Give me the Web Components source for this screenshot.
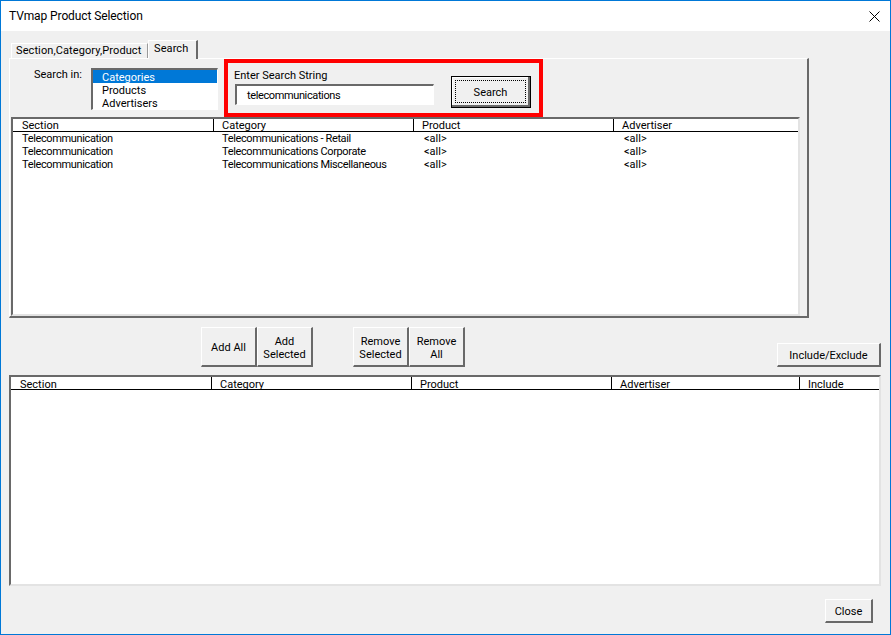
<!DOCTYPE html>
<html>
<head>
<meta charset="utf-8">
<title>TVmap Product Selection</title>
<style>
  html, body { margin: 0; padding: 0; background: #f0f0f0; }
  body { font: 11px/13px Roboto, "Liberation Sans", sans-serif; color: #000; }
</style>
</head>
<body>
<tv-dialog heading="TVmap Product Selection">
  <tv-tabs>
    <div class="top-row" style="display:flex;height:58px;">
      <div style="width:24px"></div>
      <div style="width:57px;padding-top:9px;">Search in:</div>
      <tv-listbox style="margin-top:9px"></tv-listbox>
      <tv-search style="margin-left:6px"></tv-search>
    </div>
    <tv-grid id="results" columns="200,200,200,185" style="width:789px;height:199px;margin-left:1px"></tv-grid>
  </tv-tabs>

  <div style="display:flex;align-items:flex-end;height:40px;margin:9px 0 8px 0;">
    <tv-button style="margin-left:192px;width:56px;height:40px">Add All</tv-button>
    <tv-button style="width:56px;height:40px">Add<br>Selected</tv-button>
    <tv-button style="margin-left:40px;width:56px;height:40px">Remove<br>Selected</tv-button>
    <tv-button style="width:56px;height:40px">Remove<br>All</tv-button>
    <tv-button style="margin-left:312px;width:104px;height:24px">Include/Exclude</tv-button>
  </div>

  <tv-grid id="chosen" columns="200,200,200,188,81" style="width:872px;height:211px"></tv-grid>

  <div style="display:flex;justify-content:flex-end;margin:13px 9px 0 0;">
    <tv-button style="width:48px;height:24px">Close</tv-button>
  </div>
</tv-dialog>

<script>
class TvDialog extends HTMLElement {
  constructor() {
    super();
    this.attachShadow({ mode: 'open' });
    this.shadowRoot.innerHTML = `
      <style>
        :host {
          display: block;
          box-sizing: border-box;
          width: 891px;
          height: 635px;
          border: 1px solid #0078d7;
          background: #f0f0f0;
          overflow: hidden;
        }
        .title {
          height: 30px;
          background: #fff;
          display: flex;
          align-items: center;
          justify-content: space-between;
          padding: 0 10px 0 8px;
          font-size: 12px;
          letter-spacing: -0.1px;
        }
        svg { display: block; }
        .body { padding: 9px 8px 0 8px; }
      </style>
      <div class="title">
        <span id="heading"></span>
        <svg width="11" height="11" viewBox="0 0 11 11"><path d="M.5.5l10 10M10.5.5l-10 10" stroke="#000" stroke-width="1" fill="none"/></svg>
      </div>
      <div class="body"><slot></slot></div>
    `;
    this.shadowRoot.getElementById('heading').textContent = this.getAttribute('heading');
  }
}

class TvTabs extends HTMLElement {
  constructor() {
    super();
    this.attachShadow({ mode: 'open' });
    this.shadowRoot.innerHTML = `
      <style>
        :host { display: block; width: 800px; }
        .strip { display: flex; align-items: flex-end; height: 18px; padding-left: 2px; position: relative; z-index: 1; }
        .tab {
          box-sizing: border-box;
          height: 15px;
          padding: 0 0 0 4px;
          width: 137px;
          border: 1px solid #fff;
          border-bottom: 0;
          border-right: 1px solid #9a9a9a;
          background: #f0f0f0;
          letter-spacing: 0.1px;
        }
        .tab.on {
          height: 19px;
          width: 50px;
          margin-bottom: -1px;
          padding: 1px 0 0 5px;
          border-right: 2px solid #696969;
        }
        .panel {
          box-sizing: border-box;
          height: 260px;
          border-top: 1px solid #fff;
          border-left: 1px solid #fff;
          border-right: 2px solid #696969;
          border-bottom: 2px solid #696969;
        }
      </style>
      <div class="strip">
        <div class="tab">Section,Category,Product</div>
        <div class="tab on">Search</div>
      </div>
      <div class="panel"><slot></slot></div>
    `;
  }
}

class TvListbox extends HTMLElement {
  constructor() {
    super();
    this.attachShadow({ mode: 'open' });
    this.shadowRoot.innerHTML = `
      <style>
        :host {
          display: block;
          box-sizing: border-box;
          width: 127px;
          height: 42px;
          background: #fff;
          border: 1px solid #fff;
          border-top: 2px solid #696969;
          border-left: 2px solid #696969;
        }
        div { height: 13px; line-height: 15px; padding-left: 9px; }
        .sel { background: #0078d7; color: #fff; }
      </style>
      <div class="sel">Categories</div>
      <div>Products</div>
      <div>Advertisers</div>
    `;
  }
}

class TvSearch extends HTMLElement {
  constructor() {
    super();
    this.attachShadow({ mode: 'open' });
    this.shadowRoot.innerHTML = `
      <style>
        :host {
          display: flex;
          box-sizing: border-box;
          width: 319px;
          height: 58px;
          border: 4px solid #f00;
          padding: 6px 0 0 6px;
        }
        .field { width: 217px; }
        .input {
          box-sizing: border-box;
          width: 199px;
          height: 21px;
          margin: 2px 0 0 1px;
          padding: 3px 0 0 10px;
          background: #fff;
          border: 1px solid #fff;
          border-top: 2px solid #696969;
          border-left: 2px solid #696969;
          letter-spacing: -0.38px;
        }
        .btn {
          box-sizing: border-box;
          width: 80px;
          height: 32px;
          margin-top: 7px;
          border: 1px solid #000;
          box-shadow: inset -2px -2px 0 #696969, inset 1px 1px 0 #fff;
          display: flex;
          padding: 3px 4px 4px 3px;
        }
        .btn span {
          flex: 1;
          border: 1px dotted #000;
          display: flex;
          align-items: center;
          justify-content: center;
          padding-top: 2px;
        }
      </style>
      <div class="field">
        <div>Enter Search String</div>
        <div class="input">telecommunications</div>
      </div>
      <div class="btn"><span>Search</span></div>
    `;
  }
}

class TvButton extends HTMLElement {
  constructor() {
    super();
    this.attachShadow({ mode: 'open' });
    this.shadowRoot.innerHTML = `
      <style>
        :host {
          display: flex;
          box-sizing: border-box;
          align-items: center;
          justify-content: center;
          text-align: center;
          background: #f0f0f0;
          padding-top: 2px;
          border-top: 1px solid #fff;
          border-left: 1px solid #fff;
          border-right: 2px solid #696969;
          border-bottom: 2px solid #696969;
        }
      </style>
      <div><slot></slot></div>
    `;
  }
}

// rows are filled in from the element's id, the columns come from the attribute
const GRID_DATA = {
  results: {
    head: ['Section', 'Category', 'Product', 'Advertiser'],
    rows: [
      ['Telecommunication', 'Telecommunications - Retail', '<all>', '<all>'],
      ['Telecommunication', 'Telecommunications Corporate', '<all>', '<all>'],
      ['Telecommunication', 'Telecommunications Miscellaneous', '<all>', '<all>']
    ]
  },
  chosen: {
    head: ['Section', 'Category', 'Product', 'Advertiser', 'Include'],
    rows: []
  }
};

class TvGrid extends HTMLElement {
  constructor() {
    super();
    this.attachShadow({ mode: 'open' });
    this.shadowRoot.innerHTML = `
      <style>
        :host {
          display: block;
          box-sizing: border-box;
          background: #fff;
          border: 2px solid #e3e3e3;
          border-top-color: #696969;
          border-left-color: #696969;
          overflow: hidden;
        }
        .row { display: grid; height: 13px; }
        .head { height: 12px; border-bottom: 1px solid #000; overflow: hidden; }
        .head div { border-left: 1px solid #000; padding-left: 8px; }
        .head div:first-child { border-left: 0; padding-left: 9px; }
        :host(#chosen) .head div { line-height: 15px; }
        .row:not(.head) div { padding-left: 9px; white-space: nowrap; }
        .row:not(.head) div:nth-child(-n+2) { letter-spacing: -0.36px; }
        .row:not(.head) div:nth-child(n+3) { padding-left: 11px; }
      </style>
      <div id="out"></div>
    `;
  }

  connectedCallback() {
    const data = GRID_DATA[this.id];
    const cols = this.getAttribute('columns').split(',').map(c => c + 'px').join(' ');
    const out = this.shadowRoot.getElementById('out');
    const addRow = (cells, cls) => {
      const row = document.createElement('div');
      row.className = cls;
      row.style.gridTemplateColumns = cols;
      cells.forEach(text => {
        const cell = document.createElement('div');
        cell.textContent = text;
        row.appendChild(cell);
      });
      out.appendChild(row);
    };
    addRow(data.head, 'row head');
    data.rows.forEach(r => addRow(r, 'row'));
  }
}

customElements.define('tv-dialog', TvDialog);
customElements.define('tv-tabs', TvTabs);
customElements.define('tv-listbox', TvListbox);
customElements.define('tv-search', TvSearch);
customElements.define('tv-button', TvButton);
customElements.define('tv-grid', TvGrid);
</script>
</body>
</html>
